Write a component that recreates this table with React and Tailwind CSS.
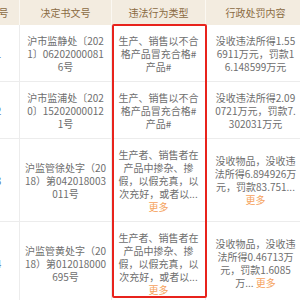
const rows = [
  {
    no: '1',
    h: 'h-[57px]',
    doc: ['沪市监静处〔202', '1〕06202000081', '6号'],
    type: ['生产、销售以不合', '格产品冒充合格#', '产品#'],
    punish: ['没收违法所得1.55', '6911万元，罚款1', '6.148599万元'],
  },
  {
    no: '2',
    h: 'h-[57px]',
    doc: ['沪市监浦处〔202', '0〕15202000012', '1号'],
    type: ['生产、销售以不合', '格产品冒充合格#', '产品#'],
    punish: ['没收违法所得2.09', '0721万元，罚款7.', '302031万元'],
  },
  {
    no: '3',
    h: 'h-[83px]',
    doc: ['沪监管徐处字（20', '18）第042018003', '011号'],
    type: ['生产者、销售者在', '产品中掺杂、掺', '假，以假充真，以', '次充好，或者以...'],
    typeMore: true,
    punish: ['没收物品，没收违', '法所得6.894926万', '元，罚款83.751...'],
    punishMore: 'block',
  },
  {
    no: '4',
    h: 'h-[83px]',
    doc: ['沪监管黄处字（20', '18）第012018000', '695号'],
    type: ['生产者、销售者在', '产品中掺杂、掺', '假，以假充真，以', '次充好，或者以...'],
    typeMore: true,
    punish: ['没收物品，没收违', '法所得0.46713万', '元，罚款1.6085', '万...'],
    punishMore: 'inline',
  },
]

function Lines({ lines, more }) {
  return (
    <div className="flex flex-col items-center">
      {lines.map((l, i) => (
        <span key={i} className="whitespace-nowrap">
          {l}
          {more === 'inline' && i === lines.length - 1 ? (
            <span className="text-[#f5a25d]"> 更多</span>
          ) : null}
        </span>
      ))}
      {more === 'block' ? <span className="text-[#f5a25d]">更多</span> : null}
    </div>
  )
}

export default function App() {
  const cell = 'flex items-center justify-center border-r border-b border-[#ececec] text-center'
  const head = 'flex items-center justify-center border-r border-[#fbf8f2] text-center'

  return (
    <div
      className="relative w-[300px] h-[300px] overflow-hidden bg-white text-[10px] leading-[13px] text-[#6e6e6e]"
      style={{ fontFamily: '"Noto Sans CJK SC", "Noto Sans", sans-serif' }}
    >
      <div className="ml-[-22px] w-[328px] grid grid-cols-[42px_92px_94px_100px]">
        {/* header */}
        <div className={`${head} h-[25px] bg-[#f3ece0] text-[#8a6a42]`}>序号</div>
        <div className={`${head} h-[25px] bg-[#f3ece0] text-[#8a6a42]`}>决定书文号</div>
        <div className={`${head} h-[25px] bg-[#f3ece0] text-[#8a6a42]`}>违法行为类型</div>
        <div className={`${head} h-[25px] bg-[#f3ece0] text-[#8a6a42]`}>行政处罚内容</div>

        {rows.map(r => (
          <div key={r.no} className="contents">
            <div className={`${cell} ${r.h} text-[#4f74aa]`}>{r.no}</div>
            <div className={`${cell} ${r.h}`}>
              <Lines lines={r.doc} />
            </div>
            <div className={`${cell} ${r.h}`}>
              <Lines lines={r.type} more={r.typeMore ? 'block' : null} />
            </div>
            <div className={`${cell} ${r.h}`}>
              <Lines lines={r.punish} more={r.punishMore} />
            </div>
          </div>
        ))}
      </div>

      {/* red highlight annotation */}
      <div className="absolute left-[112px] top-[24px] w-[95px] h-[274px] border-2 border-[#e8231c] rounded-[2px] pointer-events-none" />
    </div>
  )
}
